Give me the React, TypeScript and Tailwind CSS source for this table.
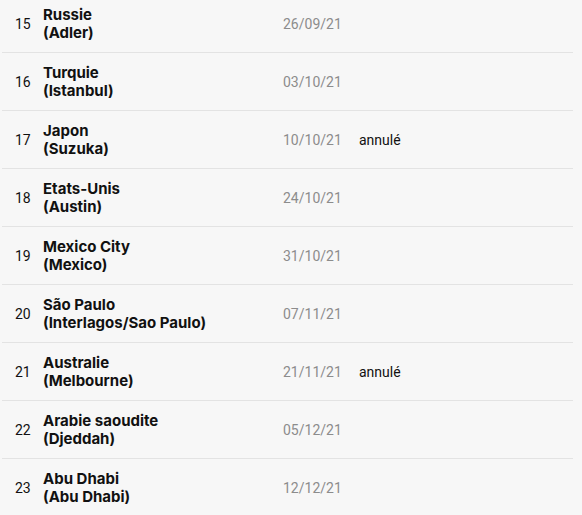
import React from "react";

const rows: [string, string, string, string, string?][] = [
  ["15", "Russie", "(Adler)", "26/09/21"],
  ["16", "Turquie", "(Istanbul)", "03/10/21"],
  ["17", "Japon", "(Suzuka)", "10/10/21", "annulé"],
  ["18", "Etats-Unis", "(Austin)", "24/10/21"],
  ["19", "Mexico City", "(Mexico)", "31/10/21"],
  ["20", "São Paulo", "(Interlagos/Sao Paulo)", "07/11/21"],
  ["21", "Australie", "(Melbourne)", "21/11/21", "annulé"],
  ["22", "Arabie saoudite", "(Djeddah)", "05/12/21"],
  ["23", "Abu Dhabi", "(Abu Dhabi)", "12/12/21"],
];

export default function App() {
  return (
    <div
      className="w-[582px] h-[515px] overflow-hidden bg-[#f7f7f7]"
      style={{ fontFamily: "Roboto, 'Liberation Sans', sans-serif" }}
    >
      <div className="-mt-[5px] pl-[2px] pr-[9px]">
        {rows.map(([n, name, city, date, status], i) => (
          <div
            key={n}
            className={`flex items-center pt-[11px] pb-[10px] ${i < rows.length - 1 ? "border-b border-[#e3e3e3]" : ""}`}
          >
            <div className="w-[41px] pl-[13px] text-[14px] leading-[18px] text-[#111]">{n}</div>
            <div
              className="w-[240px] text-[15px] leading-[18px] font-bold text-[#111]"
              style={{ fontFamily: "Inter, Roboto, sans-serif" }}
            >
              <div>{name}</div>
              <div>{city}</div>
            </div>
            <div className="w-[76px] text-[14px] leading-[18px] text-[#8c8c8c]">{date}</div>
            <div className="text-[14px] leading-[18px] text-[#111]">{status ?? ""}</div>
          </div>
        ))}
      </div>
    </div>
  );
}
